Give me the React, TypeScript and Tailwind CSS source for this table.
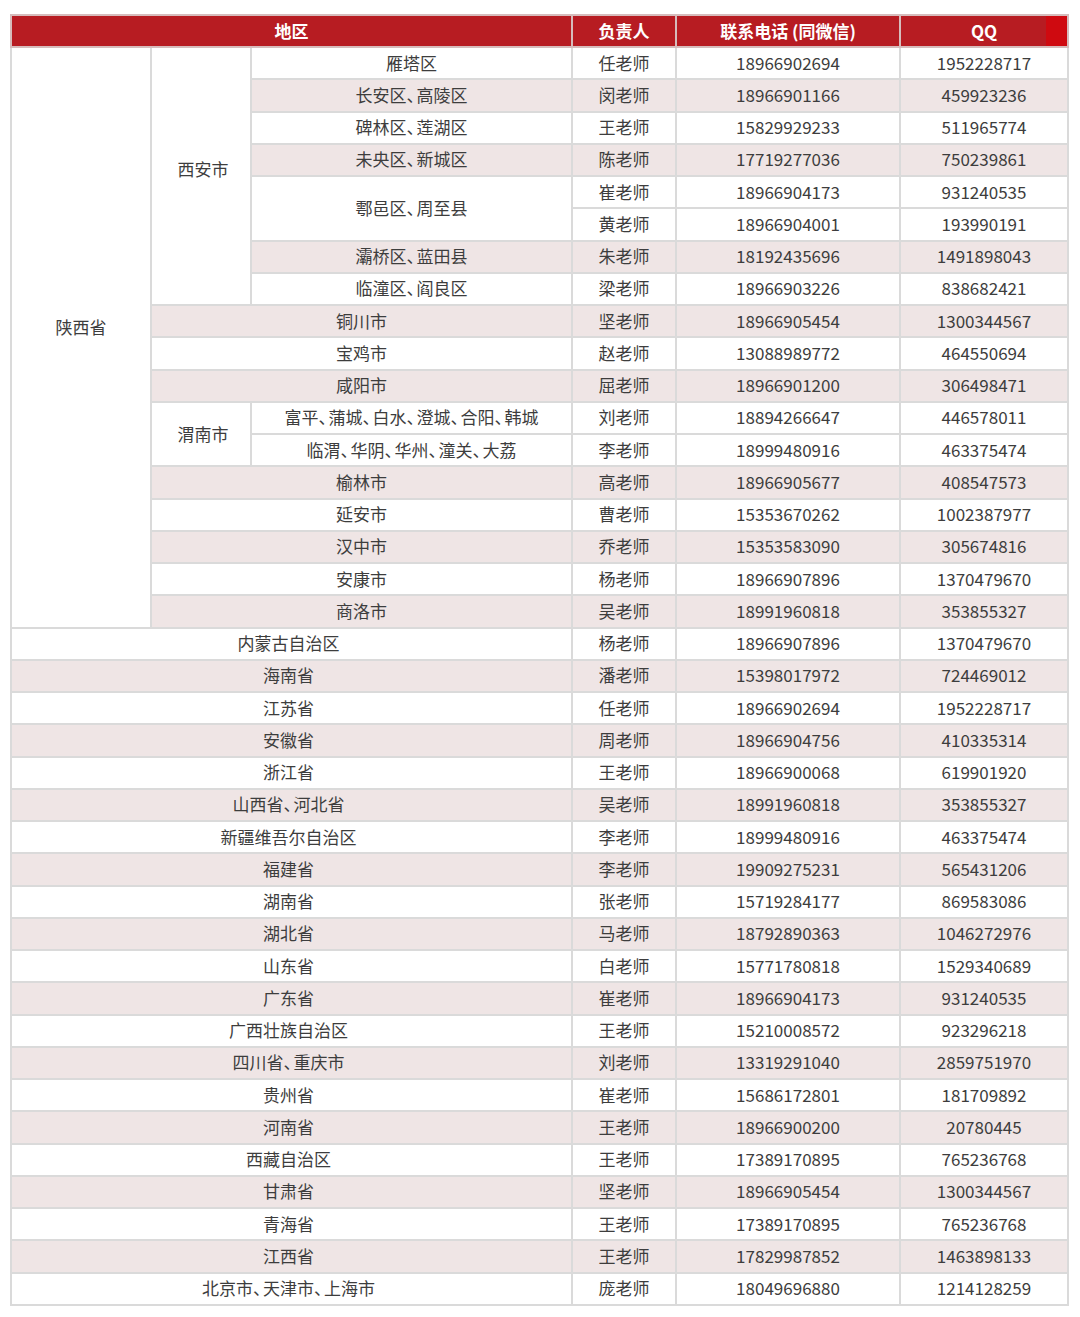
import { Fragment } from 'react';

type Cell = { text: string; colSpan?: number; rowSpan?: number; pad?: string };

type Row = {
  province?: Cell;
  city?: Cell;
  region?: Cell;
  person: string;
  phone: string;
  qq: string;
  pink?: boolean;
};

const rows: Row[] = [
  { province: { text: '陕西省', rowSpan: 18, pad: 'pb-[22px]' }, city: { text: '西安市', rowSpan: 8, pad: 'pb-[16px] pl-[4px]' }, region: { text: '雁塔区' }, person: '任老师', phone: '18966902694', qq: '1952228717' },
  { region: { text: '长安区、高陵区' }, person: '闵老师', phone: '18966901166', qq: '459923236', pink: true },
  { region: { text: '碑林区、莲湖区' }, person: '王老师', phone: '15829929233', qq: '511965774' },
  { region: { text: '未央区、新城区' }, person: '陈老师', phone: '17719277036', qq: '750239861', pink: true },
  { region: { text: '鄠邑区、周至县', rowSpan: 2 }, person: '崔老师', phone: '18966904173', qq: '931240535' },
  { person: '黄老师', phone: '18966904001', qq: '193990191' },
  { region: { text: '灞桥区、蓝田县' }, person: '朱老师', phone: '18192435696', qq: '1491898043', pink: true },
  { region: { text: '临潼区、阎良区' }, person: '梁老师', phone: '18966903226', qq: '838682421' },
  { city: { text: '铜川市', colSpan: 2 }, person: '坚老师', phone: '18966905454', qq: '1300344567', pink: true },
  { city: { text: '宝鸡市', colSpan: 2 }, person: '赵老师', phone: '13088989772', qq: '464550694' },
  { city: { text: '咸阳市', colSpan: 2 }, person: '屈老师', phone: '18966901200', qq: '306498471', pink: true },
  { city: { text: '渭南市', rowSpan: 2, pad: 'pb-[2px] pl-[4px]' }, region: { text: '富平、蒲城、白水、澄城、合阳、韩城' }, person: '刘老师', phone: '18894266647', qq: '446578011' },
  { region: { text: '临渭、华阴、华州、潼关、大荔' }, person: '李老师', phone: '18999480916', qq: '463375474' },
  { city: { text: '榆林市', colSpan: 2 }, person: '高老师', phone: '18966905677', qq: '408547573', pink: true },
  { city: { text: '延安市', colSpan: 2 }, person: '曹老师', phone: '15353670262', qq: '1002387977' },
  { city: { text: '汉中市', colSpan: 2 }, person: '乔老师', phone: '15353583090', qq: '305674816', pink: true },
  { city: { text: '安康市', colSpan: 2 }, person: '杨老师', phone: '18966907896', qq: '1370479670' },
  { city: { text: '商洛市', colSpan: 2 }, person: '吴老师', phone: '18991960818', qq: '353855327', pink: true },
];

const others: [string, string, string, string][] = [
  ['内蒙古自治区', '杨老师', '18966907896', '1370479670'],
  ['海南省', '潘老师', '15398017972', '724469012'],
  ['江苏省', '任老师', '18966902694', '1952228717'],
  ['安徽省', '周老师', '18966904756', '410335314'],
  ['浙江省', '王老师', '18966900068', '619901920'],
  ['山西省、河北省', '吴老师', '18991960818', '353855327'],
  ['新疆维吾尔自治区', '李老师', '18999480916', '463375474'],
  ['福建省', '李老师', '19909275231', '565431206'],
  ['湖南省', '张老师', '15719284177', '869583086'],
  ['湖北省', '马老师', '18792890363', '1046272976'],
  ['山东省', '白老师', '15771780818', '1529340689'],
  ['广东省', '崔老师', '18966904173', '931240535'],
  ['广西壮族自治区', '王老师', '15210008572', '923296218'],
  ['四川省、重庆市', '刘老师', '13319291040', '2859751970'],
  ['贵州省', '崔老师', '15686172801', '181709892'],
  ['河南省', '王老师', '18966900200', '20780445'],
  ['西藏自治区', '王老师', '17389170895', '765236768'],
  ['甘肃省', '坚老师', '18966905454', '1300344567'],
  ['青海省', '王老师', '17389170895', '765236768'],
  ['江西省', '王老师', '17829987852', '1463898133'],
  ['北京市、天津市、上海市', '庞老师', '18049696880', '1214128259'],
];

others.forEach(([area, person, phone, qq], i) => {
  rows.push({ province: { text: area, colSpan: 3, pad: 'pb-[2px] pr-[6px]' }, person, phone, qq, pink: i % 2 === 1 });
});

const td = 'border-2 border-[#dadada] p-0 text-center align-middle';
const th = 'border-2 border-[#d6bcbc] text-center align-middle font-bold pb-[2px]';

// 顿号在原图里是压窄的
function Text({ value }: { value: string }) {
  const parts = value.split('、');
  return (
    <>
      {parts.map((p, i) => (
        <Fragment key={i}>
          {p}
          {i < parts.length - 1 ? <span className="tracking-[-7px]">、</span> : null}
        </Fragment>
      ))}
    </>
  );
}

function AreaCell({ cell, white }: { cell: Cell; white?: boolean }) {
  return (
    <td
      colSpan={cell.colSpan}
      rowSpan={cell.rowSpan}
      className={`${td} ${white ? 'bg-white' : ''} ${cell.pad ?? 'pb-[2px]'}`}
    >
      <Text value={cell.text} />
    </td>
  );
}

export default function App() {
  return (
    <div className="min-h-[1317px] bg-white pt-[14px] pl-[10px] font-['Noto_Sans_CJK_SC',sans-serif] text-[17px] leading-none text-[#3d3d3d]">
      <table className="w-[1057px] table-fixed border-collapse">
        <colgroup>
          <col className="w-[140px]" />
          <col className="w-[100px]" />
          <col className="w-[321px]" />
          <col className="w-[104px]" />
          <col className="w-[224px]" />
          <col className="w-[168px]" />
        </colgroup>
        <thead>
          <tr className="h-[32px] bg-[#b71c22] text-white">
            <th colSpan={3} className={th}>地区</th>
            <th className={th}>负责人</th>
            <th className={th}>联系电话 (同微信)</th>
            <th className={`${th} relative`}>
              <span className="absolute inset-y-0 right-0 w-[21px] bg-[#cf0a10]" />
              <span className="relative">QQ</span>
            </th>
          </tr>
        </thead>
        <tbody>
          {rows.map((r, i) => (
            <tr key={i} className={r.pink ? 'h-[32.25px] bg-[#efe5e5]' : 'h-[32.25px] bg-white'}>
              {r.province ? <AreaCell cell={r.province} white={!!r.province.rowSpan} /> : null}
              {r.city ? <AreaCell cell={r.city} white={!!r.city.rowSpan} /> : null}
              {r.region ? <AreaCell cell={r.region} /> : null}
              <td className={`${td} pb-[2px]`}>{r.person}</td>
              <td className={`${td} pb-[2px]`}>{r.phone}</td>
              <td className={`${td} pb-[2px]`}>{r.qq}</td>
            </tr>
          ))}
        </tbody>
      </table>
    </div>
  );
}
